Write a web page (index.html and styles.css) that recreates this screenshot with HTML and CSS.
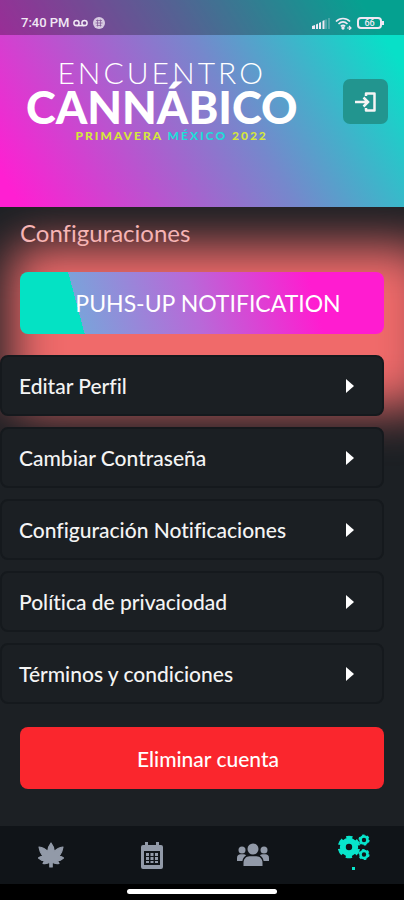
FILE: index.html
```html
<!DOCTYPE html>
<html lang="es">
<head>
<meta charset="utf-8">
<meta name="viewport" content="width=device-width, initial-scale=1">
<title>Configuraciones</title>
<link rel="stylesheet" href="styles.css">
</head>
<body>
<div class="app">
  <header class="hero">
    <div class="status">
      <div class="status-group">
        <span>7:40 PM</span>
        <svg width="15" height="8" viewBox="0 0 15 8" fill="none" stroke="currentColor" stroke-width="1.5"><circle cx="3.5" cy="4" r="2.6"/><circle cx="11.5" cy="4" r="2.6"/><path d="M3.5 6.6h8"/></svg>
        <svg class="badge" width="12" height="12" viewBox="0 0 12 12"><circle cx="6" cy="6" r="6" fill="currentColor" opacity=".8"/><path d="M3 3.500h6M2.500 6h7M3.500 8.500h5M4.500 2.500v7M7.500 2.500v7" stroke="#87609a" stroke-width=".8"/></svg>
      </div>
      <div class="status-group">
        <svg width="18" height="12" viewBox="0 0 18 12" fill="currentColor"><path d="M0 9l3-1v4H0zM4 7.500l2-1V12H4zM7 6l2-1v7H7z"/><path d="M10.500 4l2-1v9h-2z"/><path opacity=".5" d="M13.500 2.500h1V12h-1zM16.500 1h1v11h-1z"/></svg>
        <svg width="17" height="13" viewBox="0 0 17 13" fill="none" stroke="currentColor" stroke-width="1.700"><path d="M1 4.500C5 .5 11 .5 15 4.500M3.500 7c3-2.800 6-2.800 9 0M5.800 9.300c1.500-1.200 3-1.200 4.400 0"/><circle cx="8" cy="11" r=".8"/><path d="M12 11h4M14 9l2 2-2 2" stroke-width="1.200"/></svg>
        <span class="battery">66</span>
      </div>
    </div>
    <div class="brand-row">
      <div class="brand">
        <span class="brand-top">ENCUENTRO</span>
        <span class="brand-main">CANNÁBICO</span>
        <span class="brand-sub">PRIMAVERA <span class="teal">MÉXICO</span> 2022</span>
      </div>
      <button class="exit" type="button" aria-label="Salir">
        <svg width="22" height="20" viewBox="0 0 22 20" fill="none" stroke="currentColor" stroke-width="2.500"><path d="M0 10h13M8.500 5.500L13 10l-4.500 4.500"/><path d="M11 4V1.500h8.500v17H11V16" stroke-linejoin="round"/></svg>
      </button>
    </div>
  </header>

  <main class="content">
    <h1 class="title">Configuraciones</h1>
    <button class="action push" type="button">PUHS-UP NOTIFICATION</button>
    <div class="options">
      <a class="option" href="#perfil">Editar Perfil <span class="arrow"></span></a>
      <a class="option" href="#contrasena">Cambiar Contraseña <span class="arrow"></span></a>
      <a class="option" href="#notificaciones">Configuración Notificaciones <span class="arrow"></span></a>
      <a class="option" href="#privacidad">Política de privaciodad <span class="arrow"></span></a>
      <a class="option" href="#terminos">Términos y condiciones <span class="arrow"></span></a>
    </div>
    <button class="action delete" type="button">Eliminar cuenta</button>
  </main>

  <nav class="tabs">
    <a class="tab" href="#inicio" aria-label="Inicio">
      <svg width="26" height="26" viewBox="0 0 26 26" fill="currentColor" stroke="currentColor" stroke-width="1.200" stroke-linejoin="round"><path d="M13 1c2 2.500 3.300 5 3.200 8.500C18.500 7 21.500 5.500 25 5c-.5 4-2 7-4 9.300 2 0 3.500.6 4.500 1.700-1.500 1.500-3.500 2.500-6 2.500l1.500 3c-2.500.5-4.800 0-6.800-1.200V25h-2.400v-4.700C9.800 21.500 7.500 22 5 21.500l1.500-3c-2.500 0-4.500-1-6-2.500 1-1.100 2.500-1.700 4.500-1.700C3 12 1.500 9 1 5c3.500.5 6.500 2 8.800 4.500C9.700 6 11 3.500 13 1z"/></svg>
    </a>
    <a class="tab" href="#agenda" aria-label="Agenda">
      <svg width="24" height="27" viewBox="0 0 24 27" fill="currentColor"><path fill-rule="evenodd" d="M5 0h3v3h8V0h3v3h2a2 2 0 0 1 2 2v20a2 2 0 0 1-2 2H3a2 2 0 0 1-2-2V5a2 2 0 0 1 2-2h2zM4 9v14h16V9z"/><path d="M6 11h3v3H6zM10.500 11h3v3h-3zM15 11h3v3h-3zM6 15h3v3H6zM10.500 15h3v3h-3zM15 15h3v3h-3zM6 19h3v2H6zM10.500 19h3v2h-3zM15 19h3v2h-3z"/></svg>
    </a>
    <a class="tab" href="#comunidad" aria-label="Comunidad">
      <svg width="32" height="24" viewBox="0 0 32 24" fill="currentColor"><circle cx="16" cy="6" r="5.500"/><path d="M6.500 23v-3c0-4 2.500-6.800 6-6.800h7c3.500 0 6 2.800 6 6.800v3z"/><circle cx="5" cy="7" r="3.500"/><circle cx="27" cy="7" r="3.500"/><path d="M0 18v-3c0-2.500 1.500-3.700 3.500-3.700h3c1 0 2 .4 2.600 1C7 14 5.800 15.500 5.400 18zM32 18v-3c0-2.500-1.500-3.700-3.500-3.700h-3c-1 0-2 .4-2.600 1 2.100 1.700 3.300 3.200 3.700 5.700z"/></svg>
    </a>
    <a class="tab active" href="#configuraciones" aria-label="Configuraciones">
      <svg width="32" height="27" viewBox="0 0 32 27" fill="none" stroke="currentColor"><circle cx="11" cy="13" r="6.200" stroke-width="6"/><circle cx="11" cy="13" r="9.500" stroke-width="3.600" stroke-dasharray="5.950 4" stroke-dashoffset="-2"/><circle cx="26" cy="6" r="3.500" stroke-width="2.600"/><circle cx="26" cy="6" r="4.800" stroke-width="1.600" stroke-dasharray="2.510 2.510"/><circle cx="26" cy="20.500" r="3.500" stroke-width="2.600"/><circle cx="26" cy="20.500" r="4.800" stroke-width="1.600" stroke-dasharray="2.510 2.510"/></svg>
      <span class="dot"></span>
    </a>
  </nav>
  <div class="gesture"><span class="gesture-bar"></span></div>
</div>
</body>
</html>
```
FILE: styles.css
```css
* { box-sizing: border-box; }

body {
  margin: 0;
  background: #1c2024;
  color: #f4f4f4;
  font-family: Lato, "Open Sans", sans-serif;
  font-variant-ligatures: none;
}

button {
  border: 0;
  padding: 0;
  font: inherit;
  color: inherit;
}

a {
  color: inherit;
  text-decoration: none;
}

.app {
  display: flex;
  flex-direction: column;
  min-height: 100vh;
}

/* Header */
.hero {
  position: relative;
  z-index: 1;
  padding-bottom: 60px;
  background: linear-gradient(58deg, #ff1fd2 4%, #7588cc 56%, #08e0c8 92%);
}

.status {
  display: flex;
  align-items: center;
  justify-content: space-between;
  height: 35px;
  padding: 11px 22px 0 21px;
  background: rgba(0, 0, 0, .28);
  color: #f0e8f4;
  font: 500 13px/16px Roboto, sans-serif;
}

.status-group {
  display: flex;
  align-items: center;
  gap: 5px;
}

.status-group > span:first-child { margin-right: -2px; }

.battery {
  position: relative;
  width: 25px;
  height: 12px;
  border: 2px solid currentColor;
  border-radius: 4px;
  font-size: 9px;
  line-height: 8px;
  text-align: center;
}

.battery::after {
  content: "";
  position: absolute;
  top: 2px;
  right: -4px;
  width: 2px;
  height: 4px;
  background: currentColor;
}

.brand-row {
  display: flex;
  align-items: center;
  justify-content: space-between;
  padding: 21px 16px 0 26px;
}

.brand {
  display: flex;
  flex-direction: column;
  align-items: center;
  color: #fff;
}

.brand-top {
  font-size: 30px;
  line-height: 32px;
  font-weight: 300;
  letter-spacing: 3px;
}

.brand-main {
  font-size: 45px;
  line-height: 39px;
  font-weight: 900;
}

.brand-sub {
  padding: 1px 0 3px 20px;
  color: #d4e63c;
  font-size: 12px;
  line-height: 16px;
  font-weight: 900;
  letter-spacing: 2px;
}

.teal { color: #1fdcd8; }

.exit {
  display: grid;
  place-items: center;
  width: 45px;
  height: 45px;
  border-radius: 7px;
  background: #22958f;
}

/* Settings */
.content {
  position: relative;
  z-index: 0;
  flex: 1;
  padding: 12px 20px 36px;
  overflow: hidden;
}

.content::before {
  content: "";
  position: absolute;
  z-index: -1;
  top: 38px;
  left: 10px;
  right: -28px;
  height: 164px;
  border-radius: 20px;
  background: #f06a6a;
  filter: blur(24px);
}

.title {
  margin: 0 0 25px;
  color: #f6b4b4;
  font-size: 24px;
  line-height: 28px;
  font-weight: 400;
}

.action {
  display: block;
  width: 100%;
  height: 62px;
  padding-left: 12px;
  border-radius: 8px;
  color: #fff;
  font-size: 23px;
}

.push { background: linear-gradient(75deg, #04e2c4 17%, #7ba2da 17%, #b869d8 48%, #ff1cd0 80%); }

.delete {
  background: #fa262d;
  font-size: 21px;
  font-weight: 500;
}

.options {
  display: grid;
  gap: 11px;
  margin: 21px 0 23px -20px;
}

.option {
  display: flex;
  align-items: center;
  justify-content: space-between;
  height: 61px;
  padding: 0 28px 0 17px;
  border: 2px solid #15191d;
  border-radius: 8px;
  background: #1b1f23;
  font-size: 21px;
  font-weight: 500;
}

.arrow {
  border: 7px solid transparent;
  border-left: 8px solid #fff;
  border-right: 0;
}

/* Bottom navigation */
.tabs {
  display: grid;
  grid-template-columns: repeat(4, 1fr);
  height: 58px;
  background: #101418;
  color: #929aa8;
}

.tab {
  display: flex;
  flex-direction: column;
  align-items: center;
  justify-content: center;
}

.active {
  justify-content: flex-start;
  gap: 6px;
  padding-top: 8px;
  color: #08e5cb;
}

.dot {
  width: 3px;
  height: 3px;
  background: currentColor;
}

.gesture {
  display: flex;
  justify-content: center;
  height: 16px;
  padding-top: 5px;
  background: #000;
}

.gesture-bar {
  width: 150px;
  height: 5px;
  border-radius: 3px;
  background: #fff;
}
```
